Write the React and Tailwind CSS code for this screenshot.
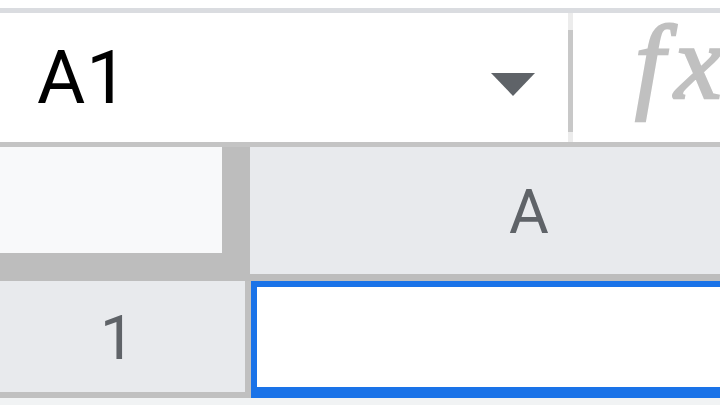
export default function App() {
  return (
    <div className="w-[720px] h-[405px] overflow-hidden bg-white flex flex-col" style={{ fontFamily: "Roboto, 'Liberation Sans', sans-serif" }}>
      <div className="h-[8px] shrink-0 bg-white" />
      <div className="h-[5px] shrink-0 bg-[#dadce0]" />
      <div className="h-[129px] shrink-0 flex bg-white">
        <div className="w-[568px] shrink-0 flex items-center relative">
          <span className="ml-[37px] text-[74px] leading-none text-[#000] tracking-[1px]">A1</span>
          <svg className="absolute left-[491px] top-[60px]" width="44" height="23" viewBox="0 0 44 23">
            <polygon points="0,0 44,0 22,23" fill="#5f6368" />
          </svg>
        </div>
        <div className="w-[5px] shrink-0 flex flex-col bg-[#ececec]">
          <div className="h-[17px]" />
          <div className="h-[102px] bg-[#c8c8c8]" />
        </div>
        <div className="flex-1 relative overflow-hidden">
          <span className="absolute left-[62px] top-[-3px] text-[106px] leading-none italic text-[#c0c0c0] whitespace-nowrap tracking-[10px] [-webkit-text-stroke:2.5px_#c0c0c0]" style={{ fontFamily: "'Liberation Serif', 'DejaVu Serif', serif" }}>fx</span>
        </div>
      </div>
      <div className="h-[5px] shrink-0 bg-[#c4c4c4]" />
      <div className="h-[134px] shrink-0 flex bg-[#bdbdbd]">
        <div className="w-[250px] shrink-0">
          <div className="w-[222px] h-[106px] bg-[#f8f9fa]" />
        </div>
        <div className="flex-1 overflow-hidden">
          <div className="w-[558px] h-[127px] bg-[#e8eaed] flex items-center justify-center">
            <span className="text-[61px] leading-none text-[#5f6368] mt-[3px]">A</span>
          </div>
        </div>
      </div>
      <div className="h-[117px] shrink-0 flex bg-[#c0c0c0]">
        <div className="w-[245px] shrink-0 h-[111px] bg-[#e8eaed] flex items-center justify-center">
          <span className="text-[62px] leading-none text-[#5f6368] ml-[-10px] mt-[2px]">1</span>
        </div>
        <div className="ml-[6px] flex-1 bg-white border-[#1a73e8] border-t-[6px] border-l-[6px] border-b-[11px]" />
      </div>
      <div className="flex-1 bg-[#f1f3f4]" />
    </div>
  );
}
